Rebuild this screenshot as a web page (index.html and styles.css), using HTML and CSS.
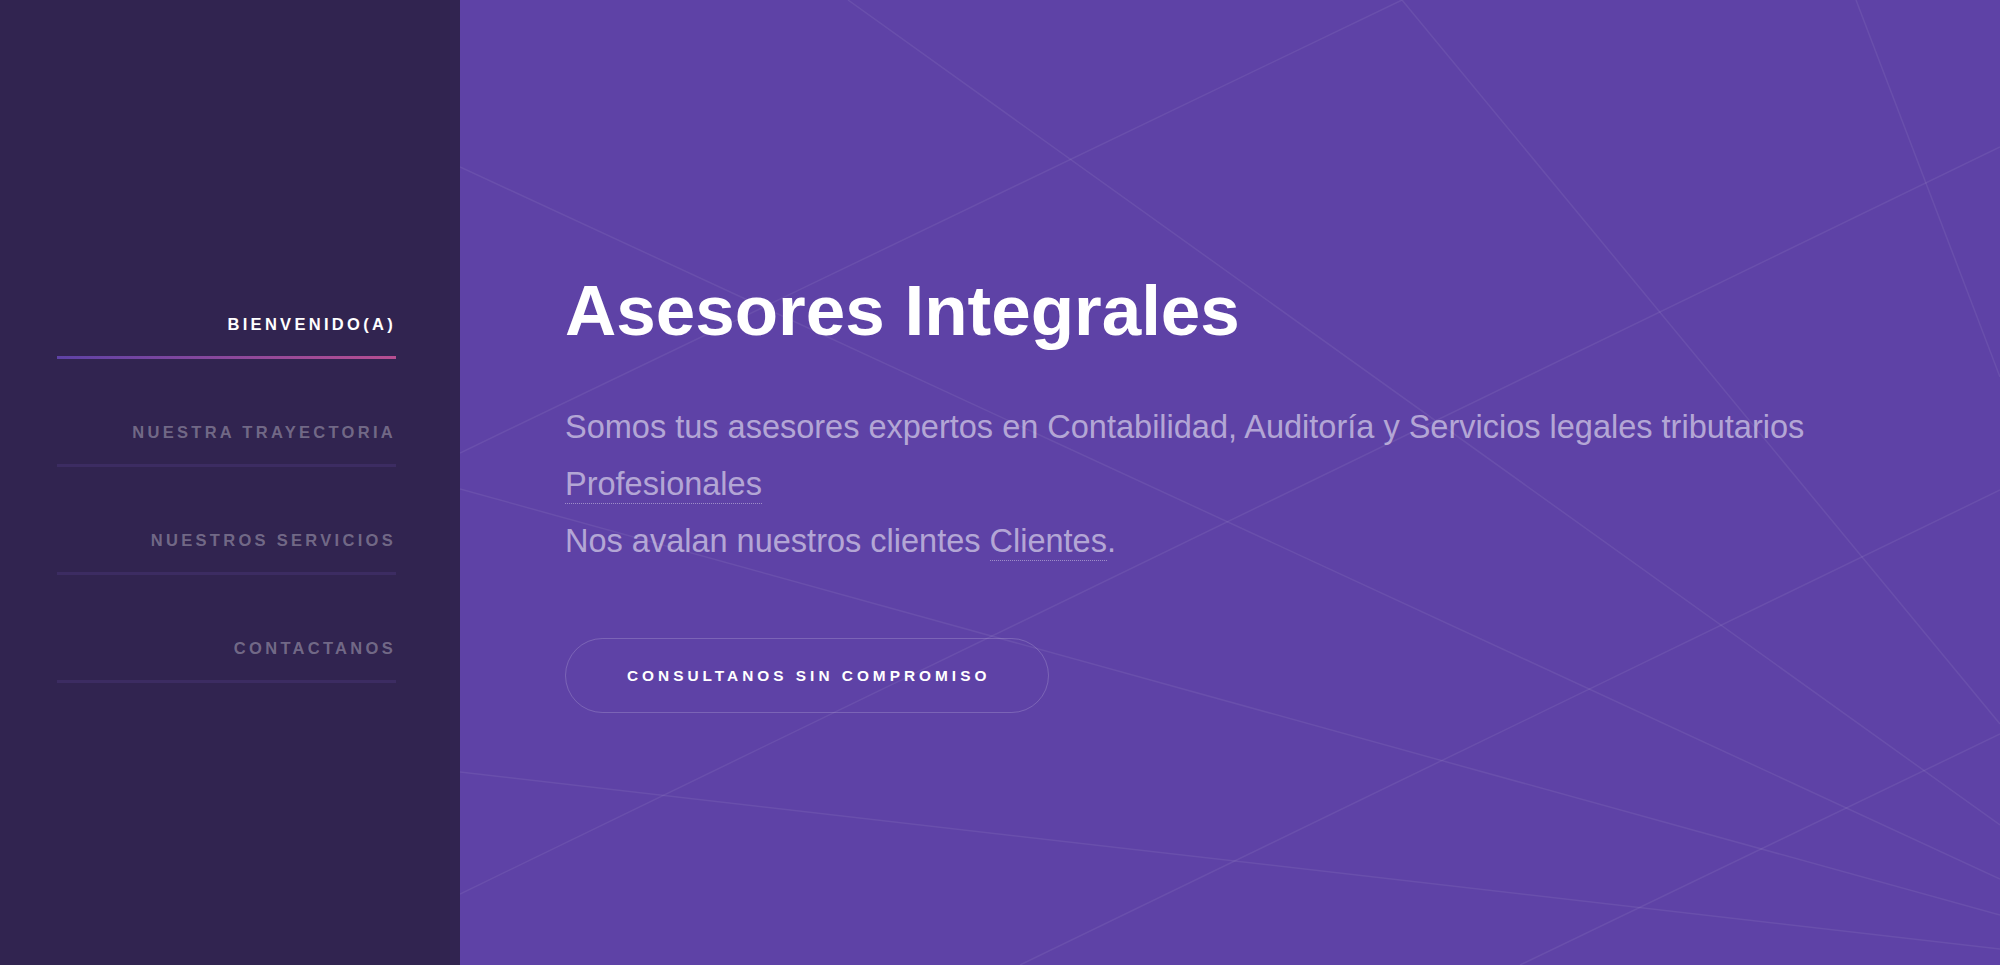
FILE: index.html
```html
<!DOCTYPE html>
<html lang="es">
<head>
<meta charset="utf-8">
<title>Asesores Integrales</title>
<link rel="stylesheet" href="styles.css">
</head>
<body>
<div class="page">
  <aside class="sidebar">
    <nav class="side-nav">
      <ul>
        <li><a class="active" href="#intro">Bienvenido(a)</a></li>
        <li><a href="#one">Nuestra Trayectoria</a></li>
        <li><a href="#two">Nuestros Servicios</a></li>
        <li><a href="#three">Contactanos</a></li>
      </ul>
    </nav>
  </aside>
  <main class="intro" id="intro">
    <svg class="bg-lines" viewBox="0 0 1540 965" preserveAspectRatio="none" aria-hidden="true">
      <g stroke="rgba(255,255,255,0.07)" stroke-width="1.5" fill="none">
        <line x1="388" y1="0" x2="1540" y2="825"/>
        <line x1="942" y1="0" x2="0" y2="453"/>
        <line x1="1540" y1="147" x2="0" y2="894"/>
        <line x1="1540" y1="490" x2="560" y2="965"/>
        <line x1="942" y1="0" x2="1540" y2="724"/>
        <line x1="1396" y1="0" x2="1540" y2="377"/>
        <line x1="0" y1="167" x2="1540" y2="879"/>
        <line x1="0" y1="489" x2="1540" y2="915"/>
        <line x1="0" y1="772" x2="1540" y2="949"/>
        <line x1="1060" y1="965" x2="1540" y2="734"/>
      </g>
    </svg>
    <div class="intro-inner">
      <h1 class="intro-title">Asesores Integrales</h1>
      <p class="intro-text">Somos tus asesores expertos en Contabilidad, Auditoría y Servicios legales tributarios <a href="#">Profesionales</a><br>Nos avalan nuestros clientes <a href="#">Clientes</a>.</p>
      <div class="actions">
        <a class="button" href="#">Consultanos sin compromiso</a>
      </div>
    </div>
  </main>
</div>
</body>
</html>
```
FILE: styles.css
```css
html, body {
  margin: 0;
  padding: 0;
}

body {
  font-family: "Liberation Sans", Arial, Helvetica, sans-serif;
  background: #5e42a6;
}

.page {
  display: flex;
  height: 965px;
  overflow: hidden;
}

.sidebar {
  box-sizing: border-box;
  width: 460px;
  flex-shrink: 0;
  background: #312450;
  padding: 314px 64px 0 57px;
}

.side-nav ul {
  list-style: none;
  margin: 0;
  padding: 0;
}

.side-nav li + li {
  margin-top: 63px;
}

.side-nav a {
  display: block;
  text-align: right;
  font-size: 16.5px;
  line-height: 20px;
  font-weight: bold;
  letter-spacing: 3.3px;
  text-transform: uppercase;
  text-decoration: none;
  color: rgba(255, 255, 255, 0.33);
}

.side-nav a::after {
  content: "";
  display: block;
  height: 3px;
  margin-top: 22px;
  background: #3c2c62;
}

.side-nav a.active {
  color: #ffffff;
}

.side-nav a.active::after {
  background: linear-gradient(to right, #5e42a6, #b74e91);
}

.intro {
  flex: 1;
  position: relative;
  background: #5e42a6;
  padding-left: 105px;
}

.bg-lines {
  position: absolute;
  left: 0;
  top: 0;
  width: 100%;
  height: 100%;
}

.intro-inner {
  position: relative;
  padding-top: 272px;
}

.intro-title {
  margin: 0;
  font-size: 71px;
  line-height: 78px;
  font-weight: bold;
  color: #ffffff;
}

.intro-text {
  margin: 49px 0 0;
  font-size: 32.5px;
  line-height: 57px;
  color: rgba(255, 255, 255, 0.55);
}

.intro-text a {
  color: inherit;
  text-decoration: none;
  padding-bottom: 1px;
  border-bottom: 1px dotted rgba(255, 255, 255, 0.4);
}

.actions {
  margin-top: 68px;
}

.button {
  display: inline-flex;
  align-items: center;
  box-sizing: border-box;
  height: 75px;
  padding: 0 58px 0 61px;
  border: 1px solid rgba(255, 255, 255, 0.18);
  border-radius: 38px;
  font-size: 15.4px;
  font-weight: bold;
  letter-spacing: 4px;
  text-transform: uppercase;
  text-decoration: none;
  color: #ffffff;
}
```
